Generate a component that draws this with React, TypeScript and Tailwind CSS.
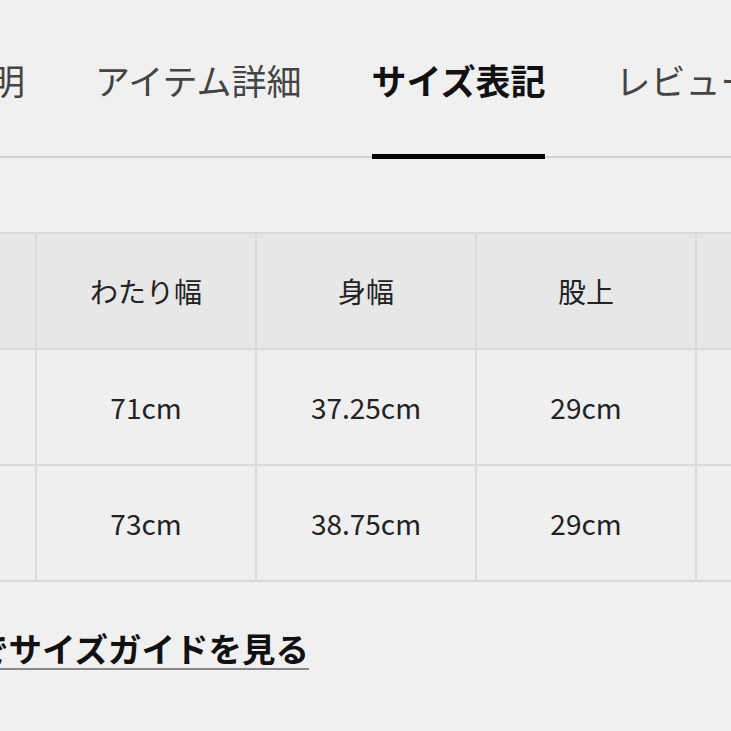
import React from "react";

const tabs = [
  { label: "商品説明", active: false },
  { label: "アイテム詳細", active: false },
  { label: "サイズ表記", active: true },
  { label: "レビュー", active: false },
];

const header = ["サイズ", "わたり幅", "身幅", "股上", "股下"];
const rows = [
  ["M", "71cm", "37.25cm", "29cm", "75cm"],
  ["L", "73cm", "38.75cm", "29cm", "77cm"],
];

export default function App() {
  return (
    <div
      className="w-[731px] h-[731px] overflow-hidden bg-[#f0f0f0]"
      style={{ fontFamily: '"Noto Sans CJK JP", "Noto Sans", sans-serif' }}
    >
      <div className="border-b-2 border-[#d2d2d2]">
        <div className="flex gap-[70px] ml-[-115px] pt-[62px] mb-[-3px] whitespace-nowrap">
          {tabs.map((t) => (
            <div
              key={t.label}
              className={`shrink-0 text-[35px] leading-[35px] pb-[57px] border-b-[5px] ${
                t.active ? "border-black text-[#111] font-bold" : "border-transparent text-[#444]"
              }`}
            >
              {t.label}
            </div>
          ))}
        </div>
      </div>

      <div className="mt-[74px] ml-[-185px] w-max grid grid-cols-[repeat(5,218px)] gap-[2px] p-[2px] bg-[#dadada] text-[28px] text-[#222]">
        {header.map((h) => (
          <div key={h} className="h-[114px] flex items-center justify-center bg-[#e7e7e7]">
            {h}
          </div>
        ))}
        {rows.map((r, i) =>
          r.map((c, j) => (
            <div key={`${i}-${j}`} className="h-[114px] flex items-center justify-center bg-[#efefef]">
              {c}
            </div>
          ))
        )}
      </div>

      <div className="mt-[49px] ml-[-25px]">
        <span className="inline-block text-[33.5px] leading-[33px] font-bold text-[#111] pb-[4px] border-b-2 border-[#8a8a8a]">
          でサイズガイドを見る
        </span>
      </div>
    </div>
  );
}
